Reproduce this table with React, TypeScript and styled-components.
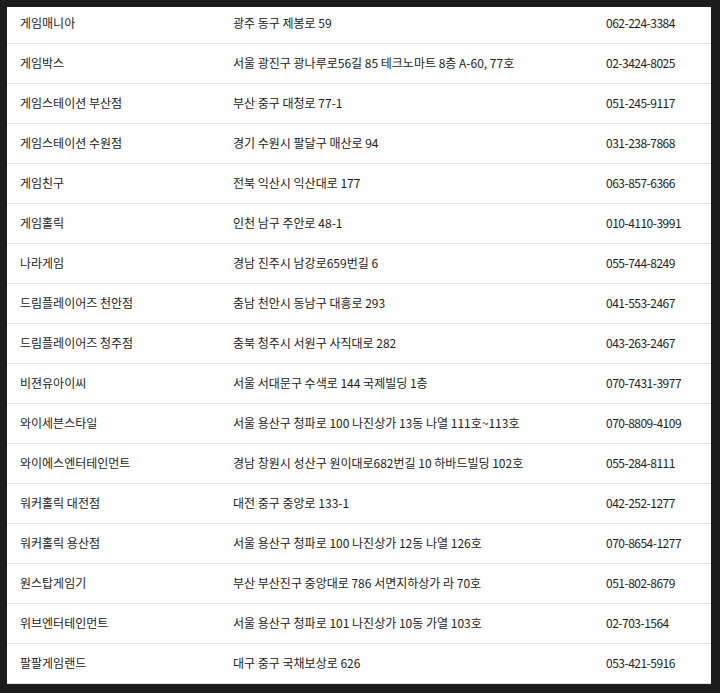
import React, { ReactElement } from 'react';
import styled, { createGlobalStyle } from 'styled-components';

const GlobalStyle = createGlobalStyle`
  html, body {
    margin: 0;
    padding: 0;
    background: #1c1c1c;
  }
  body {
    font-family: "Noto Sans CJK KR", "Noto Sans", sans-serif;
  }
`;

const StyledFrame = styled.div`
  width: 720px;
  height: 693px;
  padding: 7px 9px 9px 7px;
  box-sizing: border-box;
`;

const StyledSheet = styled.div`
  width: 704px;
  height: 677px;
  background: #ffffff;
  overflow: hidden;
`;

const StyledTable = styled.table`
  width: 704px;
  margin-top: -4px;
  border-collapse: collapse;
  table-layout: fixed;
`;

const StyledRow = styled.tr`
  height: 40px;
  border-bottom: 1px solid #e2e2e2;
`;

const StyledCell = styled.td<{ $tight?: boolean }>`
  padding: 0 0 1px 13px;
  font-size: 12px;
  color: #222222;
  white-space: nowrap;
  vertical-align: middle;
  letter-spacing: ${(p) => (p.$tight ? '-0.5px' : 'normal')};
`;

interface Shop {
  name: string
  address: string
  phone: string
}

const shops: Shop[] = [
  { name: '게임매니아', address: '광주 동구 제봉로 59', phone: '062-224-3384' },
  { name: '게임박스', address: '서울 광진구 광나루로56길 85 테크노마트 8층 A-60, 77호', phone: '02-3424-8025' },
  { name: '게임스테이션 부산점', address: '부산 중구 대청로 77-1', phone: '051-245-9117' },
  { name: '게임스테이션 수원점', address: '경기 수원시 팔달구 매산로 94', phone: '031-238-7868' },
  { name: '게임친구', address: '전북 익산시 익산대로 177', phone: '063-857-6366' },
  { name: '게임홀릭', address: '인천 남구 주안로 48-1', phone: '010-4110-3991' },
  { name: '나라게임', address: '경남 진주시 남강로659번길 6', phone: '055-744-8249' },
  { name: '드림플레이어즈 천안점', address: '충남 천안시 동남구 대흥로 293', phone: '041-553-2467' },
  { name: '드림플레이어즈 청주점', address: '충북 청주시 서원구 사직대로 282', phone: '043-263-2467' },
  { name: '비젼유아이씨', address: '서울 서대문구 수색로 144 국제빌딩 1층', phone: '070-7431-3977' },
  { name: '와이세븐스타일', address: '서울 용산구 청파로 100 나진상가 13동 나열 111호~113호', phone: '070-8809-4109' },
  { name: '와이에스엔터테인먼트', address: '경남 창원시 성산구 원이대로682번길 10 하바드빌딩 102호', phone: '055-284-8111' },
  { name: '워커홀릭 대전점', address: '대전 중구 중앙로 133-1', phone: '042-252-1277' },
  { name: '워커홀릭 용산점', address: '서울 용산구 청파로 100 나진상가 12동 나열 126호', phone: '070-8654-1277' },
  { name: '원스탑게임기', address: '부산 부산진구 중앙대로 786 서면지하상가 라 70호', phone: '051-802-8679' },
  { name: '위브엔터테인먼트', address: '서울 용산구 청파로 101 나진상가 10동 가열 103호', phone: '02-703-1564' },
  { name: '팔팔게임랜드', address: '대구 중구 국채보상로 626', phone: '053-421-5916' },
];

const App = (): ReactElement => {
  return (
    <>
      <GlobalStyle />
      <StyledFrame>
        <StyledSheet>
          <StyledTable>
            <colgroup>
              <col style={{ width: 213 }} />
              <col style={{ width: 373 }} />
              <col style={{ width: 118 }} />
            </colgroup>
            <tbody>
              {shops.map((s) => (
                <StyledRow key={s.name}>
                  <StyledCell>{s.name}</StyledCell>
                  <StyledCell>{s.address}</StyledCell>
                  <StyledCell $tight>{s.phone}</StyledCell>
                </StyledRow>
              ))}
            </tbody>
          </StyledTable>
        </StyledSheet>
      </StyledFrame>
    </>
  );
}

export default App;
